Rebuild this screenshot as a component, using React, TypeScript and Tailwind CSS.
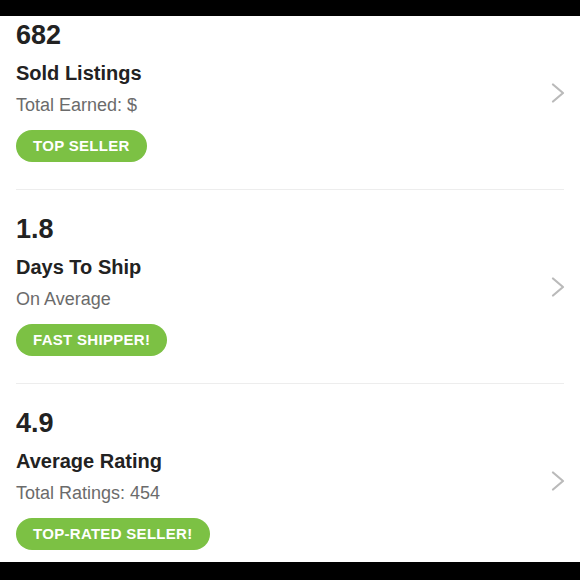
import React from 'react';

type Stat = {
  value: string;
  title: string;
  subtitle: string;
  badge: string;
};

const stats: Stat[] = [
  { value: '682', title: 'Sold Listings', subtitle: 'Total Earned: $', badge: 'TOP SELLER' },
  { value: '1.8', title: 'Days To Ship', subtitle: 'On Average', badge: 'FAST SHIPPER!' },
  { value: '4.9', title: 'Average Rating', subtitle: 'Total Ratings: 454', badge: 'TOP-RATED SELLER!' },
];

function Chevron() {
  return (
    <svg width="14" height="20" viewBox="0 0 14 20" fill="none" className="shrink-0">
      <polyline
        points="2,1.5 12,10 2,18.5"
        stroke="#bababa"
        strokeWidth="2.2"
        strokeLinecap="round"
        strokeLinejoin="round"
      />
    </svg>
  );
}

function StatRow({ stat, last }: { stat: Stat; last: boolean }) {
  return (
    <div className={`flex items-center mx-4 ${last ? '' : 'border-b border-[#ededed]'}`}>
      <div className="flex-1 flex flex-col items-start pt-[23px] pb-[27px]">
        <div className="text-[27px] leading-[32px] font-bold text-[#222222]">{stat.value}</div>
        <div className="mt-[10px] text-[20px] leading-[24px] font-bold text-[#222222]">{stat.title}</div>
        <div className="mt-[9px] text-[18px] leading-[22px] text-[#6b6b6b]">{stat.subtitle}</div>
        <div className="mt-[14px] h-[32px] px-[17px] rounded-full bg-[#7cc144] flex items-center text-white text-[15px] font-bold tracking-[0.3px]">
          {stat.badge}
        </div>
      </div>
      <div className="-mr-[1px]">
        <Chevron />
      </div>
    </div>
  );
}

export default function App() {
  return (
    <div
      className="w-[580px] h-[580px] bg-black flex flex-col overflow-hidden"
      style={{ fontFamily: '"Liberation Sans", Arial, sans-serif' }}
    >
      <div className="h-[16px] shrink-0 bg-black" />
      <div className="h-[546px] shrink-0 bg-white overflow-hidden">
        <div className="-mt-[20px]">
          {stats.map((s, i) => (
            <StatRow key={s.value} stat={s} last={i === stats.length - 1} />
          ))}
        </div>
      </div>
      <div className="flex-1 bg-black" />
    </div>
  );
}
